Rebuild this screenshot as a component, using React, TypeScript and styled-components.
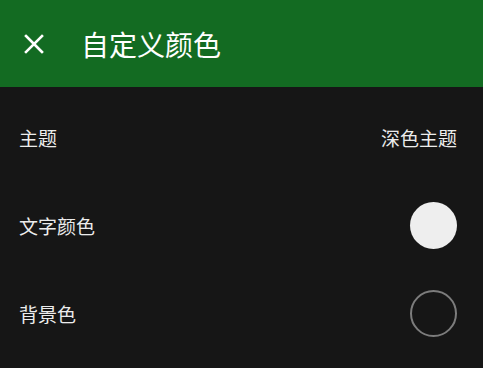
import React from 'react'
import styled, { createGlobalStyle } from 'styled-components'

const GlobalStyle = createGlobalStyle`
	html, body {
		margin: 0;
		padding: 0;
		background: #161616;
	}
	body {
		font-family: 'Noto Sans CJK SC', 'Noto Sans', sans-serif;
	}
`

const Page = styled.div`
	width: 100%;
	min-height: 100vh;
	background: #161616;
	color: #ececec;
`

const Header = styled.header`
	height: 87px;
	background: #136b22;
	display: flex;
	align-items: center;
	padding-left: 24px;
	box-sizing: border-box;
`

const CloseButton = styled.button`
	width: 20px;
	height: 20px;
	padding: 0;
	border: none;
	background: none;
	display: flex;
	align-items: center;
	justify-content: center;
	cursor: pointer;
`

const Title = styled.h1`
	margin: 0 0 0 37px;
	font-size: 28px;
	font-weight: 400;
	color: #ffffff;
`

const List = styled.div`
	padding-top: 6px;
`

const Row = styled.div`
	height: 88px;
	display: flex;
	align-items: center;
	justify-content: space-between;
	padding: 0 26px 0 19px;
`

const Label = styled.span`
	font-size: 19px;
	color: #ececec;
`

const Value = styled.span`
	font-size: 19px;
	color: #ececec;
`

const Swatch = styled.div<{ $color?: string }>`
	width: 47px;
	height: 47px;
	border-radius: 50%;
	box-sizing: border-box;
	background: ${({ $color }) => $color || 'transparent'};
	border: ${({ $color }) => ($color ? 'none' : '2px solid #7c7c7c')};
`

const App: React.FC = () => {
	return (
		<Page>
			<GlobalStyle />
			<Header>
				<CloseButton aria-label="关闭">
					<svg width="20" height="20" viewBox="0 0 20 20">
						<path
							d="M2 2 L18 18 M18 2 L2 18"
							stroke="#ffffff"
							strokeWidth="2.6"
							strokeLinecap="square"
						/>
					</svg>
				</CloseButton>
				<Title>自定义颜色</Title>
			</Header>
			<List>
				<Row>
					<Label>主题</Label>
					<Value>深色主题</Value>
				</Row>
				<Row>
					<Label>文字颜色</Label>
					<Swatch $color="#eeeeee" />
				</Row>
				<Row>
					<Label>背景色</Label>
					<Swatch />
				</Row>
			</List>
		</Page>
	)
}

export default App
